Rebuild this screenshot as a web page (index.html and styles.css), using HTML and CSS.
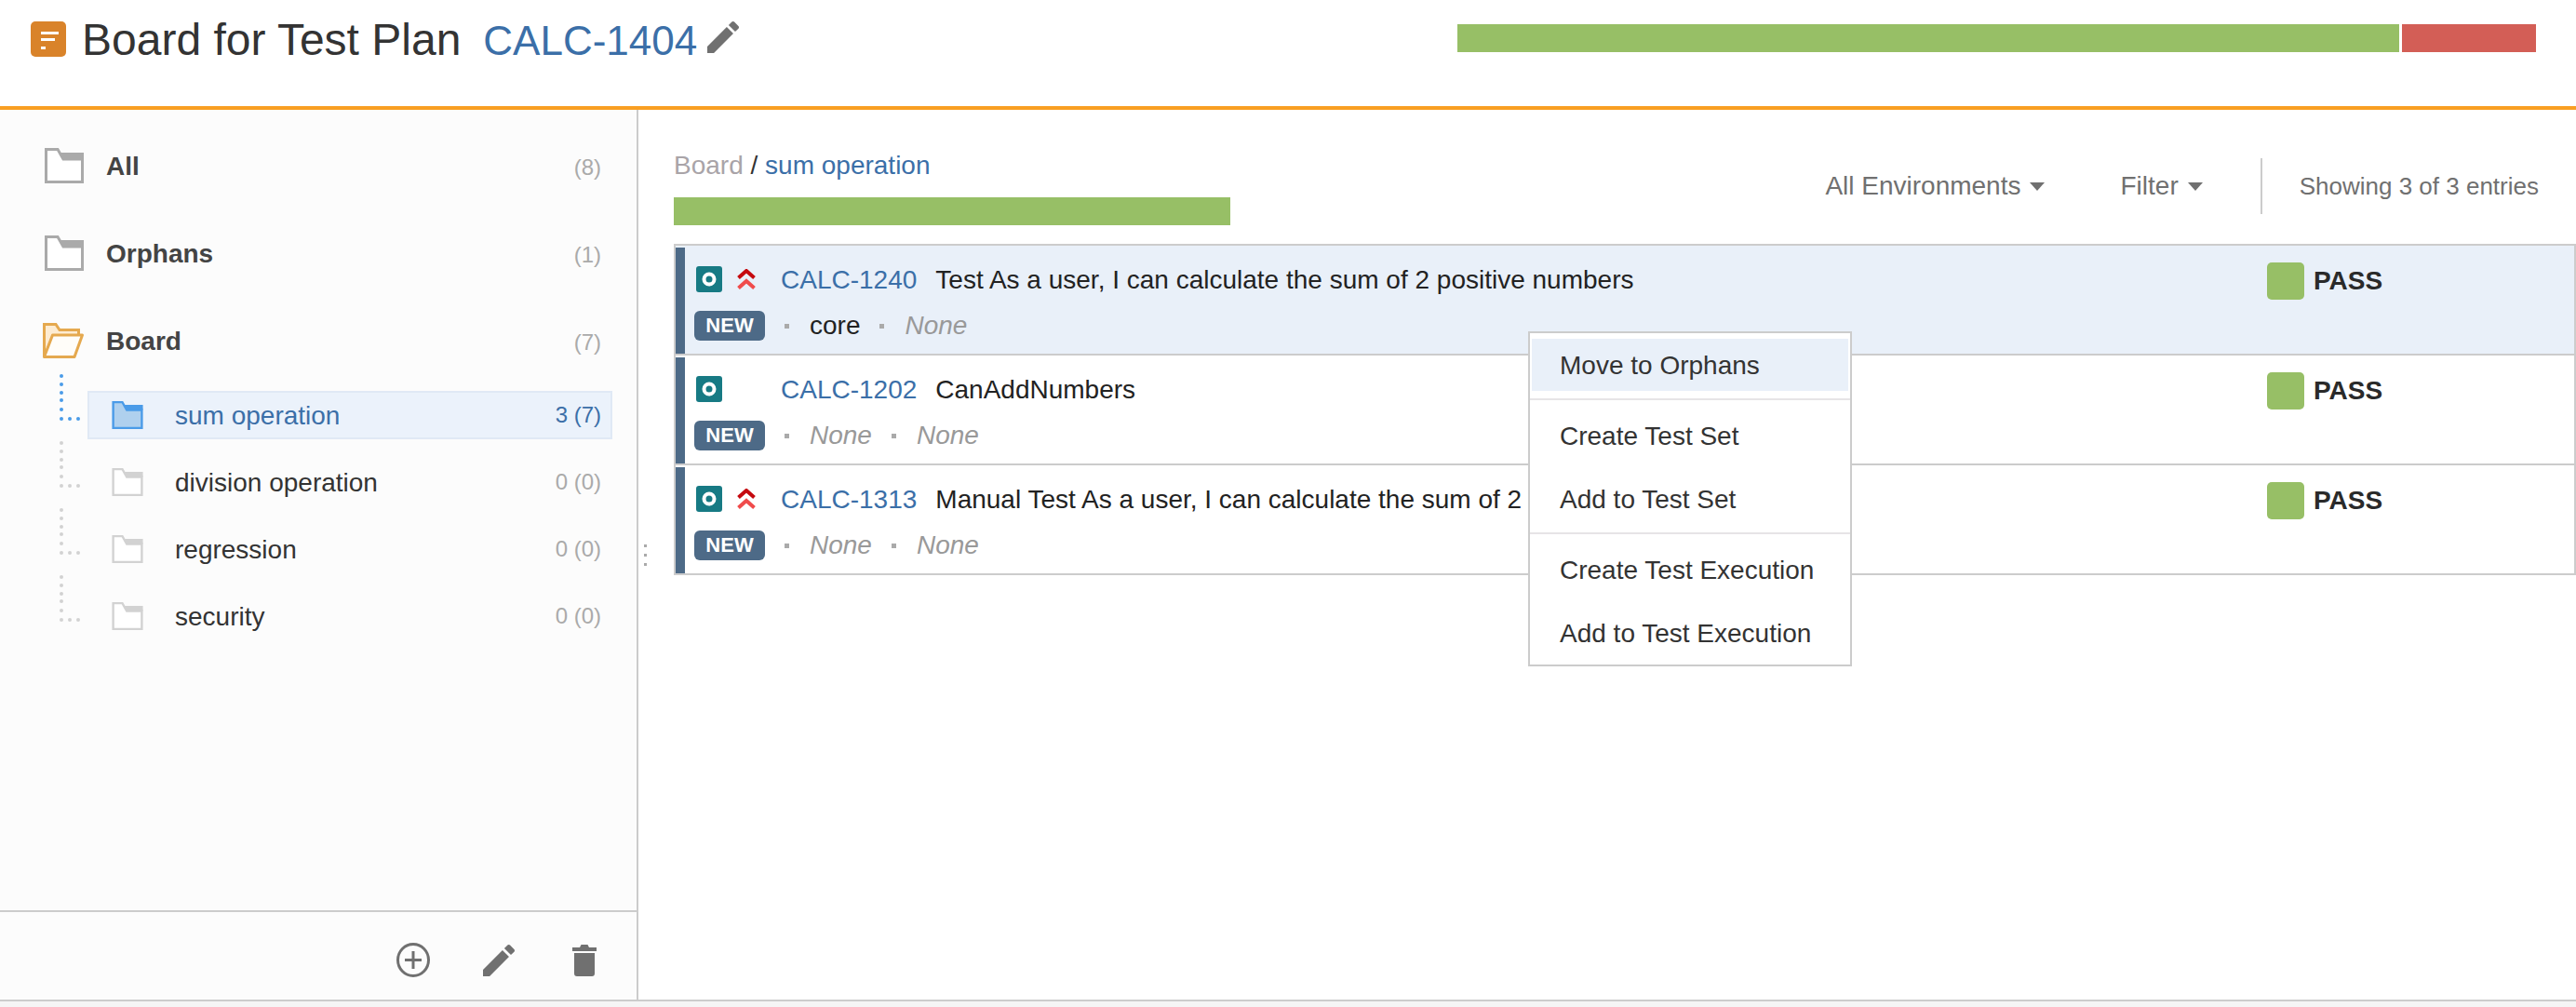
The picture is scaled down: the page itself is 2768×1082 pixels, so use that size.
FILE: index.html
```html
<!DOCTYPE html>
<html lang="en">
<head>
<meta charset="utf-8">
<title>Board for Test Plan</title>
<link rel="stylesheet" href="styles.css">
</head>
<body>
<svg class="defs" width="0" height="0" aria-hidden="true">
  <symbol id="pencil" viewBox="3 3 18 18"><path d="M3 17.25V21h3.75L17.81 9.94l-3.75-3.75L3 17.25zM20.71 7.04c.39-.39.39-1.02 0-1.41l-2.34-2.34c-.39-.39-1.02-.39-1.41 0l-1.83 1.83 3.75 3.75 1.83-1.83z"/></symbol>
  <symbol id="folder" viewBox="0 0 42 38"><path class="f-body" d="M1.5 1.5H14L20 12H40.5V36.5H1.5Z"/><path class="f-band" d="M16 5H42V12H20Z"/></symbol>
  <symbol id="folder-open" viewBox="0 0 44 38"><path d="M1.5 36.5V1.5H14L18 7.5H38.5V14H11L1.5 36.5Z" fill="#fdecd2" stroke="#e5a94f" stroke-width="3"/><path d="M10.500 13H42.500L34 36.500H1.500Z" fill="#fffdf9" stroke="#e5a94f" stroke-width="3" stroke-linejoin="round"/></symbol>
  <symbol id="dots-v" viewBox="0 0 24 50"><g><circle cx="2" cy="2" r="2"/><circle cx="2" cy="11" r="2"/><circle cx="2" cy="20" r="2"/><circle cx="2" cy="28" r="2"/><circle cx="2" cy="38" r="2"/><circle cx="2" cy="48" r="2"/><circle cx="11" cy="48" r="2"/><circle cx="20" cy="48" r="2"/></g></symbol>
  <symbol id="type-o" viewBox="0 0 28 28"><rect width="28" height="28" rx="3" fill="#177a84"/><circle cx="14" cy="14" r="5.500" fill="none" stroke="#fff" stroke-width="4"/></symbol>
  <symbol id="prio" viewBox="0 0 20 22"><path d="M1.500 9.500L10 2 18.500 9.500" fill="none" stroke="#c5090f" stroke-width="4"/><path d="M1.500 20.500L10 13 18.500 20.500" fill="none" stroke="#f04c4c" stroke-width="4"/></symbol>
</svg>

<div class="page">
  <header class="top">
    <svg class="plan-icon" viewBox="0 0 38 38"><rect width="38" height="38" rx="5" fill="#d9832a"/><path d="M11 11H30V14H11ZM11 18H26V21H11ZM11 27H16V30H11Z" fill="#fff"/></svg>
    <h1 class="title">Board for Test Plan</h1>
    <a class="plan-key">CALC-1404</a>
    <svg class="plan-edit"><use href="#pencil"/></svg>
    <div class="progress">
      <span class="progress-pass"></span>
      <span class="progress-fail"></span>
    </div>
  </header>

  <div class="content">
    <aside class="sidebar">
      <nav class="tree">
        <div class="root-row"><svg class="root-folder folder-grey"><use href="#folder"/></svg><span class="root-name">All</span><span class="root-count">(8)</span></div>
        <div class="root-row"><svg class="root-folder folder-grey"><use href="#folder"/></svg><span class="root-name">Orphans</span><span class="root-count">(1)</span></div>
        <div class="root-row"><svg class="root-folder root-folder-open"><use href="#folder-open"/></svg><span class="root-name">Board</span><span class="root-count">(7)</span></div>
        <div class="children">
          <div class="child child-active"><svg class="connector connector-blue"><use href="#dots-v"/></svg><svg class="child-folder folder-blue"><use href="#folder"/></svg><span class="child-name">sum operation</span><span class="child-count"><b>3</b> (7)</span></div>
          <div class="child"><svg class="connector"><use href="#dots-v"/></svg><svg class="child-folder folder-light"><use href="#folder"/></svg><span class="child-name">division operation</span><span class="child-count">0 (0)</span></div>
          <div class="child"><svg class="connector"><use href="#dots-v"/></svg><svg class="child-folder folder-light"><use href="#folder"/></svg><span class="child-name">regression</span><span class="child-count">0 (0)</span></div>
          <div class="child"><svg class="connector"><use href="#dots-v"/></svg><svg class="child-folder folder-light"><use href="#folder"/></svg><span class="child-name">security</span><span class="child-count">0 (0)</span></div>
        </div>
      </nav>
      <div class="side-tools">
        <svg class="tool-add" viewBox="0 0 36 37"><ellipse cx="18" cy="18.500" rx="16.500" ry="17" fill="none" stroke="#707070" stroke-width="3"/><path d="M9 17H27V20H9ZM16.500 9H19.500V28H16.500Z" fill="#707070"/></svg>
        <svg class="tool-edit"><use href="#pencil"/></svg>
        <svg class="tool-trash" viewBox="0 0 26 34"><path d="M0 3H8L9.500 0H16.500L18 3H26V7H0ZM2 9H24V31Q24 34 21 34H5Q2 34 2 31Z" fill="#707070"/></svg>
      </div>
    </aside>

    <main class="pane">
      <div class="grip"><i></i><i></i><i></i></div>
      <div class="pane-head">
        <div class="crumb-col">
          <div class="crumb"><span class="crumb-root">Board</span> / <a class="link">sum operation</a></div>
          <div class="crumb-bar"></div>
        </div>
        <div class="toolbar">
          <span class="drop">All Environments<i class="caret"></i></span>
          <span class="drop drop-filter">Filter<i class="caret"></i></span>
          <span class="rule"></span>
          <span class="entries">Showing 3 of 3 entries</span>
        </div>
      </div>

      <div class="list">
        <div class="row row-selected">
          <span class="row-bar"></span>
          <div class="row-body">
            <div class="line-one">
              <svg class="type-icon"><use href="#type-o"/></svg>
              <svg class="prio-icon"><use href="#prio"/></svg>
              <a class="link row-key">CALC-1240</a>
              <span class="row-title">Test As a user, I can calculate the sum of 2 positive numbers</span>
            </div>
            <div class="line-two">
              <span class="badge">NEW</span><i class="sep-dot"></i><span class="meta">core</span><i class="sep-dot"></i><em class="none">None</em>
            </div>
          </div>
          <div class="status"><span class="status-box"></span><strong class="status-text">PASS</strong></div>
        </div>
        <div class="row">
          <span class="row-bar"></span>
          <div class="row-body">
            <div class="line-one">
              <svg class="type-icon"><use href="#type-o"/></svg>
              <span class="prio-icon"></span>
              <a class="link row-key">CALC-1202</a>
              <span class="row-title">CanAddNumbers</span>
            </div>
            <div class="line-two">
              <span class="badge">NEW</span><i class="sep-dot"></i><em class="none">None</em><i class="sep-dot"></i><em class="none">None</em>
            </div>
          </div>
          <div class="status"><span class="status-box"></span><strong class="status-text">PASS</strong></div>
        </div>
        <div class="row">
          <span class="row-bar"></span>
          <div class="row-body">
            <div class="line-one">
              <svg class="type-icon"><use href="#type-o"/></svg>
              <svg class="prio-icon"><use href="#prio"/></svg>
              <a class="link row-key">CALC-1313</a>
              <span class="row-title">Manual Test As a user, I can calculate the sum of 2</span>
            </div>
            <div class="line-two">
              <span class="badge">NEW</span><i class="sep-dot"></i><em class="none">None</em><i class="sep-dot"></i><em class="none">None</em>
            </div>
          </div>
          <div class="status"><span class="status-box"></span><strong class="status-text">PASS</strong></div>
        </div>
      </div>

      <div class="menu">
        <div class="menu-group menu-group-first">
          <div class="menu-item menu-item-active">Move to Orphans</div>
        </div>
        <div class="menu-group">
          <div class="menu-item">Create Test Set</div>
          <div class="menu-item">Add to Test Set</div>
        </div>
        <div class="menu-group menu-group-last">
          <div class="menu-item">Create Test Execution</div>
          <div class="menu-item">Add to Test Execution</div>
        </div>
      </div>
    </main>
  </div>
  <div class="page-foot"></div>
</div>
</body>
</html>
```

FILE: styles.css
```css
* { box-sizing: border-box; }
html, body { margin: 0; height: 100%; overflow: hidden; }
body { font-family: "Liberation Sans", Arial, sans-serif; font-size: 28px; color: #333; background: #fff; }
.defs { position: absolute; }
.page { display: flex; flex-direction: column; height: 1082px; }

/* header */
.top { display: flex; align-items: flex-start; height: 118px; padding: 23px 43px 0 33px; border-bottom: 4px solid #f99f22; flex: none; }
.plan-icon { width: 38px; height: 38px; flex: none; }
.title { margin: -3px 0 0 17px; font-size: 48px; line-height: 46px; font-weight: 400; color: #333; white-space: nowrap; }
.plan-key { margin: -2px 0 0 24px; font-size: 44px; line-height: 46px; color: #3b6fa8; }
.plan-edit { width: 34px; height: 34px; margin: 0 0 0 11px; fill: #707070; }
.progress { display: flex; gap: 3px; margin: 3px 0 0 auto; }
.progress-pass { width: 1012px; height: 30px; background: #97bf66; }
.progress-fail { width: 144px; height: 30px; background: #d35e56; }

.content { display: flex; flex: 1; min-height: 0; border-bottom: 2px solid #ccc; }

/* sidebar */
.sidebar { display: flex; flex-direction: column; width: 686px; flex: none; background: #fcfcfc; border-right: 2px solid #ccc; }
.tree { flex: 1; padding-top: 13px; }
.root-row { display: flex; align-items: center; height: 94px; padding: 0 38px 0 48px; }
.root-folder { width: 42px; height: 38px; flex: none; }
.root-folder-open { width: 44px; margin-left: -2px; }
.root-name { margin: 2px 0 0 24px; font-weight: 700; color: #444; }
.root-count { margin: 4px 0 0 auto; font-size: 24px; color: #aaa; }
.folder-grey { --f: #fff; --s: #aaa; --b: #aaa; }
.folder-light { --f: #fff; --s: #d2d2d2; --b: #d2d2d2; }
.folder-blue { --f: #afd0ee; --s: #4a9be8; --b: #4a9be8; }
.f-body { fill: var(--f); stroke: var(--s); stroke-width: 3; }
.f-band { fill: var(--b); }
.children { display: flex; flex-direction: column; gap: 20px; margin: 7px 26px 0 94px; }
.child { position: relative; display: flex; align-items: center; height: 52px; padding: 0 10px 0 24px; border: 2px solid transparent; }
.child-active { background: #ebf2fb; border-color: #e0e9f5; }
.connector { position: absolute; left: -32px; top: -20px; width: 24px; height: 50px; fill: #d2d2d2; }
.connector-blue { fill: #4a9be8; }
.child-folder { width: 34px; height: 30px; flex: none; }
.child-name { margin: 2px 0 0 34px; color: #333; }
.child-active .child-name { color: #3b6fa8; }
.child-count { margin-left: auto; font-size: 24px; color: #aaa; }
.child-count b { font-weight: 400; }
.child-active .child-count { color: #3b6fa8; }
.side-tools { display: flex; align-items: flex-start; justify-content: flex-end; height: 96px; padding: 33px 43px 0 0; border-top: 2px solid #ccc; flex: none; }
.tool-add { width: 36px; height: 37px; }
.tool-edit { width: 34px; height: 34px; margin: 2px 0 0 57px; fill: #707070; }
.tool-trash { width: 26px; height: 34px; margin: 2px 0 0 62px; }

/* main pane */
.pane { position: relative; flex: 1; min-width: 0; padding-left: 38px; }
.grip { position: absolute; left: 6px; top: 467px; display: flex; flex-direction: column; gap: 7px; }
.grip i { display: block; width: 3px; height: 3px; background: #aaa; }
.pane-head { display: flex; justify-content: space-between; height: 144px; padding-right: 40px; }
.crumb-col { padding-top: 44px; }
.crumb { height: 32px; line-height: 32px; color: #333; }
.crumb-root { color: #a9a4a8; }
.link { color: #3b6fa8; }
.crumb-bar { width: 598px; height: 30px; margin-top: 18px; background: #97bf66; }
.toolbar { display: flex; align-items: center; height: 60px; margin-top: 52px; color: #707070; }
.drop { display: flex; align-items: center; white-space: nowrap; }
.drop-filter { margin-left: 81px; }
.caret { width: 0; height: 0; margin-left: 10px; border-left: 8px solid transparent; border-right: 8px solid transparent; border-top: 9px solid #707070; }
.rule { width: 2px; height: 60px; margin: 0 40px 0 62px; background: #ccc; }
.entries { font-size: 26px; white-space: nowrap; }

/* rows */
.list { border-top: 2px solid #ccc; }
.row { display: flex; height: 118px; padding-top: 2px; border: 2px solid #ccc; border-width: 0 2px 2px 2px; }
.row-selected { background: #e9f0f9; }
.row-bar { width: 10px; flex: none; background: #4d6a87; }
.row-body { flex: 1; min-width: 0; padding: 18px 0 0 10px; }
.line-one, .line-two { display: flex; align-items: center; height: 32px; white-space: nowrap; }
.line-two { margin-top: 18px; }
.type-icon { width: 28px; height: 28px; margin-left: 2px; flex: none; }
.prio-icon { display: block; width: 20px; height: 22px; margin-left: 16px; flex: none; }
.row-key { margin: 2px 0 0 27px; }
.row-title { margin: 2px 0 0 20px; color: #222; }
.badge { display: block; width: 76px; height: 32px; line-height: 32px; border-radius: 6px; background: #4d6a87; color: #fff; font-size: 22px; font-weight: 700; text-align: center; }
.sep-dot { display: block; width: 5px; height: 5px; margin: 0 22px 0 21px; background: #aaa; }
.meta { color: #222; }
.none { color: #999; }
.status { display: flex; align-items: flex-start; width: 330px; padding-top: 16px; flex: none; }
.status-box { width: 40px; height: 40px; border-radius: 5px; background: #97bf66; }
.status-text { margin-left: 10px; line-height: 40px; color: #2a2a2a; }

/* context menu */
.menu { position: absolute; left: 956px; top: 238px; width: 348px; height: 360px; background: #fff; border: 2px solid #ccc; }
.menu-group { padding: 4px 0 2px; border-top: 2px solid #e6e4e6; }
.menu-group-first { padding: 6px 2px 8px; border-top: 0; }
.menu-group-last { padding-bottom: 0; }
.menu-item { display: flex; align-items: center; height: 68px; padding: 1px 0 0 32px; color: #333; white-space: nowrap; }
.menu-item-active { height: 56px; padding-left: 30px; background: #e9f0f9; }

.page-foot { height: 6px; flex: none; background: #f5f5f5; }
```
